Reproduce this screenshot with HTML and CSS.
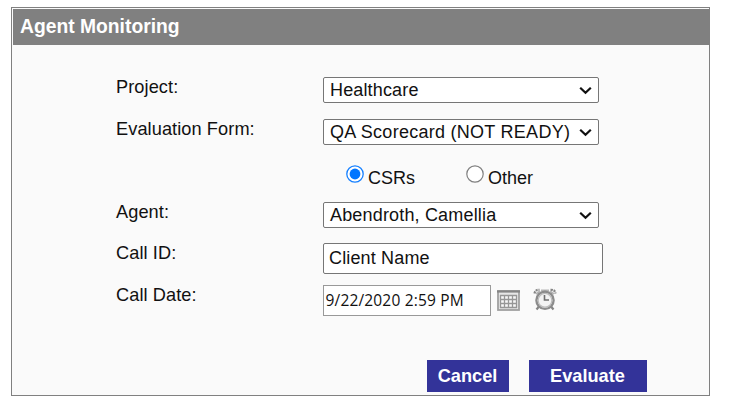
FILE: index.html
```html
<!DOCTYPE html>
<html lang="en">
<head>
<meta charset="utf-8">
<title>Agent Monitoring</title>
<link rel="stylesheet" href="styles.css">
</head>
<body>
<main class="panel">
  <h1 class="title"><span>Agent Monitoring</span></h1>
  <form class="form">
    <div class="row row-project">
      <label class="label"><span>Project:</span></label>
      <div class="select"><span class="t-health">Healthcare</span><svg class="chev" viewBox="0 0 13 9"><path d="M1.2 1.7 6.5 6.8 11.8 1.7"/></svg></div>
    </div>
    <div class="row row-form">
      <label class="label"><span>Evaluation Form:</span></label>
      <div class="select"><span class="t-score">QA Scorecard (NOT READY)</span><svg class="chev" viewBox="0 0 13 9"><path d="M1.2 1.7 6.5 6.8 11.8 1.7"/></svg></div>
    </div>
    <div class="row row-type">
      <div class="radios">
        <div class="option"><svg class="radio" viewBox="0 0 18 18"><circle cx="9" cy="9" r="8.2" fill="#fff" stroke="#1680ff" stroke-width="1.3"/><circle cx="9" cy="9" r="5.4" fill="#0075ff"/></svg><span>CSRs</span></div>
        <div class="option"><svg class="radio" viewBox="0 0 18 18"><circle cx="9" cy="9" r="8.2" fill="#fff" stroke="#808080" stroke-width="1.2"/></svg><span>Other</span></div>
      </div>
    </div>
    <div class="row row-agent">
      <label class="label"><span>Agent:</span></label>
      <div class="select"><span class="t-agent">Abendroth, Camellia</span><svg class="chev" viewBox="0 0 13 9"><path d="M1.2 1.7 6.5 6.8 11.8 1.7"/></svg></div>
    </div>
    <div class="row row-call">
      <label class="label"><span>Call ID:</span></label>
      <div class="input"><span>Client Name</span></div>
    </div>
    <div class="row row-date">
      <label class="label"><span>Call Date:</span></label>
      <div class="date"><span>9/22/2020 2:59 PM</span></div>
      <svg class="calendar" viewBox="0 0 23 21">
        <rect x="1" y="1" width="21" height="19" fill="#e6e6e6" stroke="#a0a0a0" stroke-width="1.8"/>
        <path d="M0 1.5h23" stroke="#858585" stroke-width="2.2"/>
        <rect x="3.5" y="5.5" width="16" height="12" fill="#f7f7f7"/>
        <path d="M3 5.5h17M3 9.5h17M3 13.5h17M3 17.5h17M3.5 5v13M7.5 5v13M11.5 5v13M15.5 5v13M19.5 5v13" fill="none" stroke="#969696" stroke-width="1.3"/>
      </svg>
      <svg class="clock" viewBox="0 0 24 24">
        <path d="M6 18.500 3.500 21.500M18 18.500l2.500 3" stroke="#858585" stroke-width="2.200"/>
        <path d="M1.500 5.500Q2 1.500 6.500 1.800M17.500 1.800q4.500-.3 5 3.700" fill="none" stroke="#858585" stroke-width="2.200" stroke-dasharray="2.200 .8"/>
        <path d="M3 6 7 3M21 6l-4-3M8 2.300h8" stroke="#b5b5b5" stroke-width="1.600"/>
        <circle cx="12" cy="12.300" r="8.600" fill="#f3f3f3" stroke="#8c8c8c" stroke-width="2.400"/>
        <circle cx="12" cy="12.300" r="6.900" fill="none" stroke="#bdbdbd" stroke-width="1.300"/>
        <path d="M11.500 7v5h4.500" fill="none" stroke="#6f6f6f" stroke-width="1.600"/>
      </svg>
    </div>
  </form>
  <div class="actions">
    <button class="button cancel" type="button"><span>Cancel</span></button>
    <button class="button evaluate" type="button"><span>Evaluate</span></button>
  </div>
</main>
</body>
</html>
```

FILE: styles.css
```css
* { box-sizing: border-box; }
body {
  margin: 0;
  padding: 7px 0 0 11px;
  background: #fff;
  color: #111;
  font: 18px/20px "Liberation Sans", Arial, sans-serif;
}
span { white-space: nowrap; }
.panel {
  width: 699px;
  height: 389px;
  border: 1px solid #808080;
  background: #fafafa;
  padding: 1px 0 0 1px;
}
.title {
  margin: 0;
  height: 36px;
  padding: 7px 0 0 7px;
  background: #808080;
  color: #fff;
  font-size: 19.3px;
  line-height: 22px;
}
.form { height: 306px; padding: 32px 0 0 103px; }
.row { display: flex; align-items: flex-start; }
.row-project, .row-form { height: 42px; }
.row-type { height: 41px; padding-left: 230px; }
.row-agent { height: 41px; }
.row-call { height: 42px; }
.label { width: 207px; font-size: 18.2px; letter-spacing: .08px; }
.select {
  display: flex;
  align-items: center;
  justify-content: space-between;
  width: 276px;
  height: 26px;
  padding: 0 6px;
  border: 1px solid #767676;
  border-radius: 2px;
  background: #fff;
}
.t-health { letter-spacing: .15px; }
.t-score { letter-spacing: .27px; }
.t-agent { letter-spacing: .17px; }
.chev { width: 13px; height: 9px; flex: none; }
.chev path { fill: none; stroke: #111; stroke-width: 2.2; }
.radios { display: flex; padding-top: 4px; }
.option { display: flex; width: 120px; gap: 4px; }
.option span { padding-top: 3px; }
.radio { width: 18px; height: 18px; }
.input {
  width: 280px;
  height: 31px;
  padding: 4px 5px;
  border: 1px solid #767676;
  border-radius: 2px;
  background: #fff;
  letter-spacing: .15px;
}
.date {
  width: 168px;
  height: 31px;
  padding: 4px 1.5px;
  border: 1px solid #999;
  background: #fff;
  font: 15.5px/20px "Open Sans", "Noto Sans", sans-serif;
  letter-spacing: .17px;
}
.calendar { width: 23px; height: 21px; margin: 5px 0 0 6px; }
.clock { width: 24px; height: 24px; margin: 3px 0 0 13px; }
.actions { display: flex; gap: 20px; padding: 9px 0 0 414px; }
.button {
  height: 32px;
  padding: 0 1px 0 0;
  border: 0;
  background: #333399;
  color: #fff;
  font: bold 18.2px/20px "Liberation Sans", Arial, sans-serif;
}
.cancel { width: 82px; }
.evaluate { width: 118px; }
```
